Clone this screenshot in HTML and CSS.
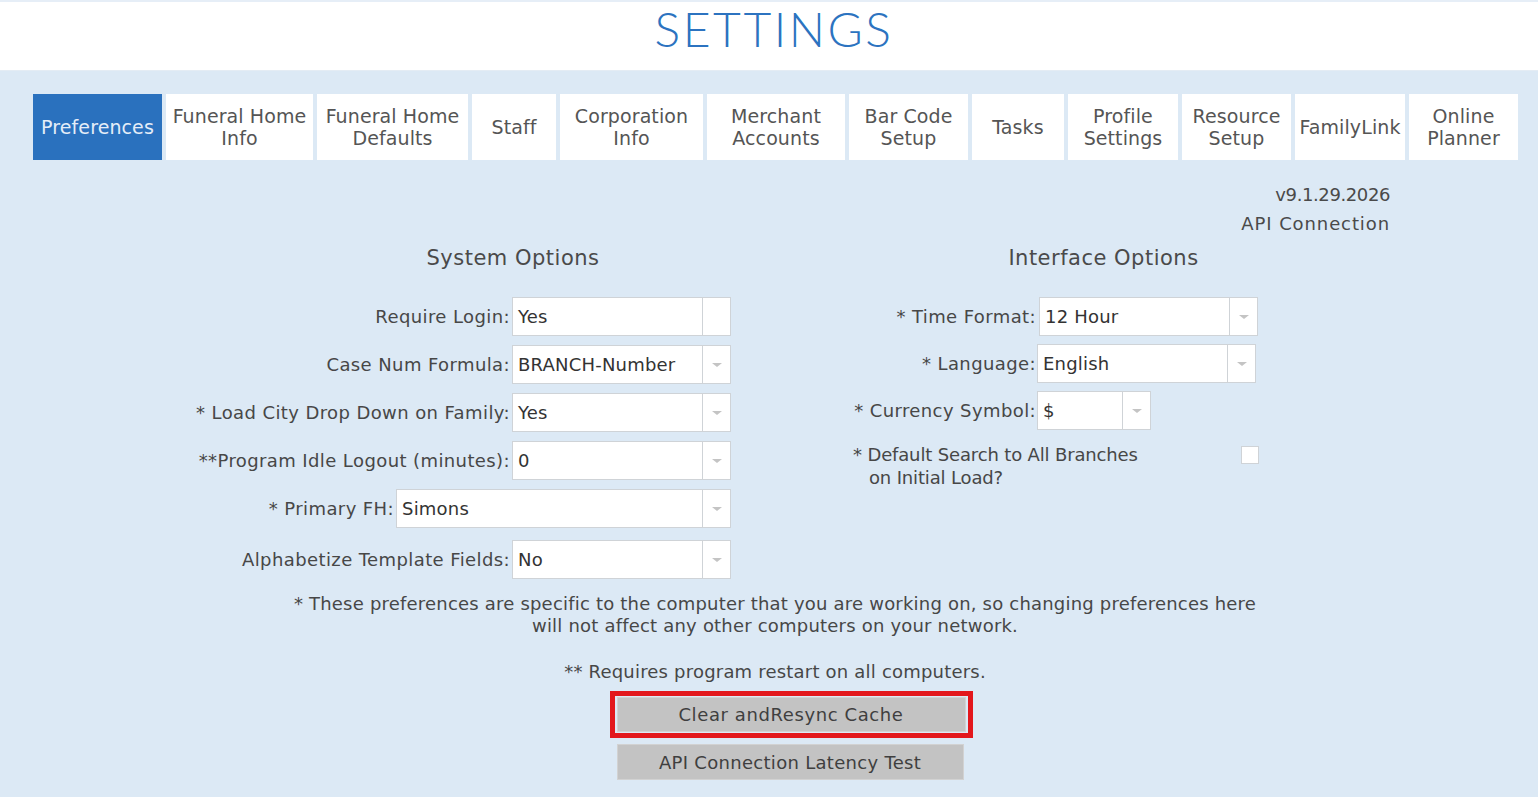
FILE: index.html
```html
<!DOCTYPE html>
<html>
<head>
<meta charset="utf-8">
<link rel="stylesheet" href="styles.css">
</head>
<body>
<header class="header"><h1 class="title">SETTINGS</h1></header>
<main class="main">
  <nav class="tabs">
    <div class="tab active">Preferences</div>
    <div class="tab">Funeral Home<br>Info</div>
    <div class="tab">Funeral Home<br>Defaults</div>
    <div class="tab">Staff</div>
    <div class="tab">Corporation<br>Info</div>
    <div class="tab">Merchant<br>Accounts</div>
    <div class="tab">Bar Code<br>Setup</div>
    <div class="tab">Tasks</div>
    <div class="tab">Profile<br>Settings</div>
    <div class="tab">Resource<br>Setup</div>
    <div class="tab">FamilyLink</div>
    <div class="tab">Online<br>Planner</div>
  </nav>
  <div class="version">
    <div>v9.1.29.2026</div>
    <div class="api">API Connection</div>
  </div>
  <div class="columns">
    <section class="col col-left">
      <h2 class="col-title">System Options</h2>
      <div class="row"><label class="lbl">Require Login:</label><div class="select"><span class="val">Yes</span><span class="drop"></span></div></div>
      <div class="row"><label class="lbl">Case Num Formula:</label><div class="select"><span class="val">BRANCH-Number</span><span class="drop"><i class="caret"></i></span></div></div>
      <div class="row"><label class="lbl">* Load City Drop Down on Family:</label><div class="select"><span class="val">Yes</span><span class="drop"><i class="caret"></i></span></div></div>
      <div class="row"><label class="lbl">**Program Idle Logout (minutes):</label><div class="select"><span class="val">0</span><span class="drop"><i class="caret"></i></span></div></div>
      <div class="row"><label class="lbl">* Primary FH:</label><div class="select wide"><span class="val">Simons</span><span class="drop"><i class="caret"></i></span></div></div>
      <div class="row last"><label class="lbl">Alphabetize Template Fields:</label><div class="select"><span class="val">No</span><span class="drop"><i class="caret"></i></span></div></div>
    </section>
    <section class="col col-right">
      <h2 class="col-title">Interface Options</h2>
      <div class="grid">
        <label class="lbl">* Time Format:</label><div class="select"><span class="val">12 Hour</span><span class="drop"><i class="caret"></i></span></div>
        <label class="lbl">* Language:</label><div class="select shift"><span class="val">English</span><span class="drop"><i class="caret"></i></span></div>
        <label class="lbl">* Currency Symbol:</label><div class="select small shift"><span class="val">$</span><span class="drop"><i class="caret"></i></span></div>
      </div>
      <div class="check-row">
        <div class="check-lbl">* Default Search to All Branches<br><span class="indent">on Initial Load?</span></div>
        <span class="checkbox"></span>
      </div>
    </section>
  </div>
  <div class="notes">
    <p class="note">* These preferences are specific to the computer that you are working on, so changing preferences here<br>will not affect any other computers on your network.</p>
    <p class="note note2">** Requires program restart on all computers.</p>
  </div>
  <div class="buttons">
    <div class="highlight"><button class="btn">Clear andResync Cache</button></div>
    <button class="btn btn2">API Connection Latency Test</button>
  </div>
</main>
</body>
</html>
```
FILE: styles.css
```css
* { box-sizing: border-box; }
html, body { margin: 0; padding: 0; }
body {
  width: 1538px;
  height: 797px;
  overflow: hidden;
  background: #dce9f5;
  font-family: "DejaVu Sans", sans-serif;
  color: #474747;
}
.header {
  height: 71px;
  background: #fff;
  border-top: 2px solid #e6eef7;
  border-bottom: 1px solid #e4ecf4;
  display: flex;
  justify-content: center;
}
.title {
  margin: 0;
  font-family: Lato, "DejaVu Sans", sans-serif;
  font-weight: 300;
  font-size: 48px;
  line-height: 54px;
  color: #2c73c0;
  letter-spacing: 2.5px;
  padding-left: 10px;
}
.main { padding-top: 23px; }
.tabs {
  display: flex;
  gap: 4px;
  margin-left: 33px;
  height: 66px;
}
.tab {
  background: #fff;
  color: #555;
  font-size: 19px;
  line-height: 22px;
  text-align: center;
  display: flex;
  align-items: center;
  justify-content: center;
  letter-spacing: 0.1px;
  padding-bottom: 1px;
}
.tab.active { background: #2a71be; color: #e4edf8; }
.tab:nth-child(1) { width: 129px; }
.tab:nth-child(2) { width: 147px; }
.tab:nth-child(3) { width: 151px; }
.tab:nth-child(4) { width: 84px; }
.tab:nth-child(5) { width: 143px; }
.tab:nth-child(6) { width: 138px; }
.tab:nth-child(7) { width: 119px; }
.tab:nth-child(8) { width: 92px; }
.tab:nth-child(9) { width: 110px; }
.tab:nth-child(10) { width: 109px; }
.tab:nth-child(11) { width: 110px; }
.tab:nth-child(12) { width: 109px; }

.version {
  margin-top: 20px;
  padding-right: 148px;
  text-align: right;
  font-size: 18px;
  line-height: 29px;
  color: #4a4a4a;
  letter-spacing: -0.4px;
}
.version .api { letter-spacing: 0.9px; }
.columns {
  display: flex;
  padding-left: 180px;
  gap: 109px;
}
.col-left { width: 551px; }
.col-right { width: 420px; }
.col-title {
  margin: 9px 0 28px;
  font-weight: 400;
  font-size: 21px;
  line-height: 22px;
  text-align: center;
  color: #4a4a4a;
  letter-spacing: 0.5px;
}
.col-left .col-title { margin-left: 115px; }
.col-right .col-title { margin-left: 107px; }
.row {
  display: flex;
  justify-content: flex-end;
  align-items: center;
  gap: 2px;
  margin-bottom: 9px;
}
.row.last { margin-top: 12px; }
.lbl {
  font-size: 18px;
  color: #474747;
  letter-spacing: 0.4px;
  white-space: nowrap;
}
.select {
  width: 219px;
  height: 39px;
  background: #fff;
  border: 1px solid #cfd3d7;
  display: flex;
}
.select.wide { width: 335px; }
.select.small { width: 114px; }
.val {
  flex: 1;
  font-size: 18px;
  line-height: 37px;
  padding-left: 5px;
  color: #333;
  letter-spacing: 0.2px;
}
.drop {
  width: 28px;
  border-left: 1px solid #cfd3d7;
  display: flex;
  align-items: center;
  justify-content: center;
}
.caret {
  width: 0;
  height: 0;
  border-left: 5px solid transparent;
  border-right: 5px solid transparent;
  border-top: 4px solid #c4c4c4;
}
.grid {
  display: grid;
  grid-template-columns: 196px 219px;
  column-gap: 3px;
  row-gap: 8px;
  align-items: center;
}
.grid .lbl { text-align: right; }
.grid .shift { margin-left: -2px; }
.check-row {
  display: flex;
  justify-content: space-between;
  align-items: flex-start;
  padding-left: 13px;
  margin-top: 13px;
}
.check-lbl {
  font-size: 18px;
  line-height: 23px;
  color: #474747;
  letter-spacing: -0.15px;
}
.indent { padding-left: 16px; }
.checkbox {
  width: 18px;
  height: 18px;
  background: #fff;
  border: 1px solid #cfd3d7;
  margin-top: 3px;
  margin-right: 1px;
}
.notes {
  padding-left: 12px;
  text-align: center;
  margin-top: 5px;
}
.note {
  margin: 0;
  font-size: 18px;
  line-height: 22px;
  color: #474747;
  letter-spacing: 0.2px;
}
.note2 { margin-top: 24px; }
.buttons {
  display: flex;
  flex-direction: column;
  align-items: center;
  padding-left: 44px;
  margin-top: 8px;
}
.highlight {
  border: 5px solid #e3171c;
  padding: 1px 2px;
  width: 363px;
  height: 47px;
}
.btn {
  display: block;
  width: 349px;
  height: 35px;
  background: #c3c3c3;
  border: 1px solid #d2d2d2;
  font-family: "DejaVu Sans", sans-serif;
  font-size: 18px;
  color: #3f3f3f;
  letter-spacing: 0.6px;
  padding: 0;
}
.btn2 {
  margin-top: 6px;
  width: 347px;
  height: 36px;
  margin-right: 2px;
  letter-spacing: 0.3px;
}
```
